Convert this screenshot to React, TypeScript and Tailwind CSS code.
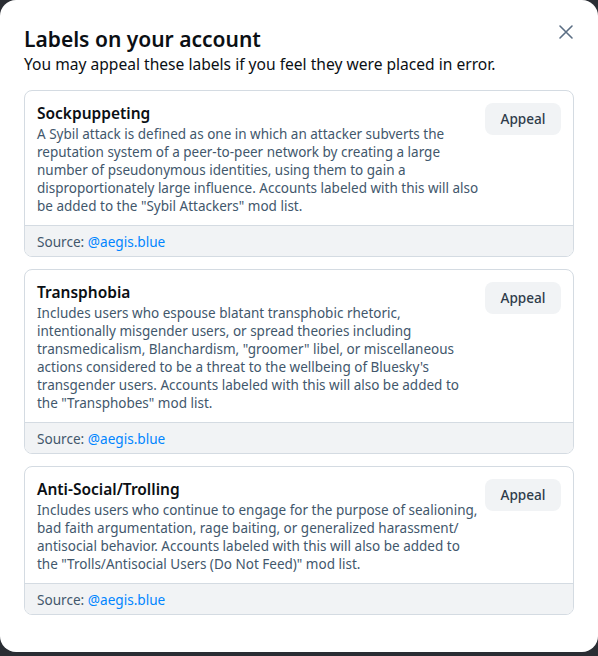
const labels = [
  {
    title: 'Sockpuppeting',
    text: 'A Sybil attack is defined as one in which an attacker subverts the reputation system of a peer-to-peer network by creating a large number of pseudonymous identities, using them to gain a disproportionately large influence. Accounts labeled with this will also be added to the "Sybil Attackers" mod list.',
  },
  {
    title: 'Transphobia',
    text: 'Includes users who espouse blatant transphobic rhetoric, intentionally misgender users, or spread theories including transmedicalism, Blanchardism, "groomer" libel, or miscellaneous actions considered to be a threat to the wellbeing of Bluesky\'s transgender users. Accounts labeled with this will also be added to the "Transphobes" mod list.',
  },
  {
    title: 'Anti-Social/Trolling',
    text: 'Includes users who continue to engage for the purpose of sealioning, bad faith argumentation, rage baiting, or generalized harassment/ antisocial behavior. Accounts labeled with this will also be added to the "Trolls/Antisocial Users (Do Not Feed)" mod list.',
  },
];

export default function App() {
  return (
    <div className="h-[656px] w-[598px] bg-[#2a2d33] font-['Noto_Sans',sans-serif]">
      <div className="relative h-[652px] rounded-2xl bg-white px-6 pt-[25px]">
        <button className="absolute right-[24px] top-[24px] text-[#5b6e84]">
          <svg width="16" height="16" viewBox="0 0 16 16" fill="none" stroke="currentColor" strokeWidth="1.6" strokeLinecap="round">
            <path d="M2 2L14 14M14 2L2 14" />
          </svg>
        </button>
        <h1 className="text-[21px] leading-[28px] font-semibold text-[#0b0f14]">Labels on your account</h1>
        <p className="text-[15.6px] leading-[22px] text-[#0b0f14]">
          You may appeal these labels if you feel they were placed in error.
        </p>
        <div className="mt-[15px] flex flex-col gap-3">
          {labels.map((l) => (
            <div key={l.title} className="overflow-hidden rounded-lg border border-[#d4dbe2]">
              <div className="flex gap-1 px-3 pt-3 pb-2.5">
                <div className="flex-1">
                  <div className="text-[15.5px] leading-5 font-semibold text-[#0b0f14]">{l.title}</div>
                  <p className="mt-0.5 text-[13.5px] leading-[18px] text-[#42576c]">{l.text}</p>
                </div>
                <button className="h-8 w-[76px] shrink-0 rounded-lg bg-[#f1f3f5] text-[13.6px] font-medium text-[#2e3b4a]">
                  Appeal
                </button>
              </div>
              <div className="border-t border-[#d4dbe2] bg-[#f1f3f5] px-3 pt-[7px] pb-[5px] text-[13.6px] leading-[18px] text-[#42576c]">
                Source: <span className="text-[#0085ff]">@aegis.blue</span>
              </div>
            </div>
          ))}
        </div>
      </div>
    </div>
  );
}
